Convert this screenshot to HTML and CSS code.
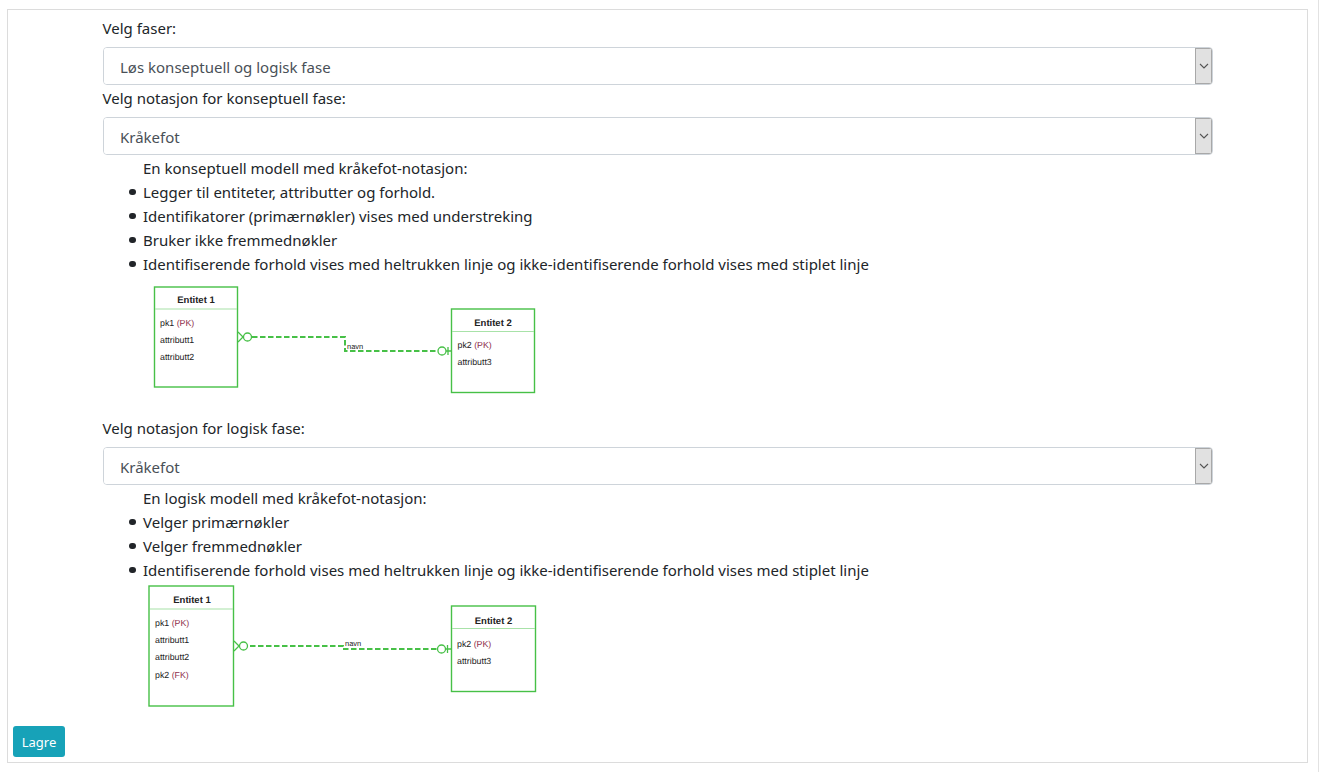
FILE: index.html
```html
<!DOCTYPE html>
<html lang="en">
<head>
    <meta charset="UTF-8">
    <title>Velg faser</title>
    <link rel="stylesheet" href="styles.css">
</head>
<body>
    <form class="panel">
        <div class="fields">
            <label class="field-label" for="faser">Velg faser:</label>
            <div class="select-box">
                <select id="faser"><option>Løs konseptuell og logisk fase</option></select>
                <span class="select-arrow"><svg width="10" height="6" viewBox="0 0 10 6"><path d="M1 1l4 4 4-4" fill="none" stroke="#555" stroke-width="1.1"/></svg></span>
            </div>

            <label class="field-label" for="konseptuell">Velg notasjon for konseptuell fase:</label>
            <div class="select-box">
                <select id="konseptuell"><option>Kråkefot</option></select>
                <span class="select-arrow"><svg width="10" height="6" viewBox="0 0 10 6"><path d="M1 1l4 4 4-4" fill="none" stroke="#555" stroke-width="1.1"/></svg></span>
            </div>
            <div class="notes">
                <p>En konseptuell modell med kråkefot-notasjon:</p>
                <ul>
                    <li>Legger til entiteter, attributter og forhold.</li>
                    <li>Identifikatorer (primærnøkler) vises med understreking</li>
                    <li>Bruker ikke fremmednøkler</li>
                    <li>Identifiserende forhold vises med heltrukken linje og ikke-identifiserende forhold vises med stiplet linje</li>
                </ul>
            </div>
            <svg class="diagram diagram-first" width="400" height="120" viewBox="143 280 400 120">
                <rect class="box" x="154.5" y="287" width="83" height="100"/>
                <line class="divider" x1="155" y1="309" x2="237" y2="309"/>
                <text class="title" x="196" y="303">Entitet 1</text>
                <text class="row" x="160" y="326">pk1 <tspan class="key">(PK)</tspan></text>
                <text class="row" x="160" y="343">attributt1</text>
                <text class="row" x="160" y="360">attributt2</text>
                <path class="edge" d="M238 332l5 5-5 5"/>
                <circle class="edge" cx="247.5" cy="337" r="4"/>
                <path class="edge dashed" d="M252 337H345V351H438"/>
                <circle class="edge" cx="442" cy="351" r="4"/>
                <path class="edge" d="M446 351h6M448 347v8"/>
                <text class="edge-label" x="347" y="349">navn</text>
                <rect class="box" x="451.5" y="309" width="83" height="83.5"/>
                <line class="divider" x1="452" y1="331.5" x2="534" y2="331.5"/>
                <text class="title" x="493" y="325.5">Entitet 2</text>
                <text class="row" x="457.5" y="348">pk2 <tspan class="key">(PK)</tspan></text>
                <text class="row" x="457.5" y="365">attributt3</text>
            </svg>

            <label class="field-label" for="logisk">Velg notasjon for logisk fase:</label>
            <div class="select-box">
                <select id="logisk"><option>Kråkefot</option></select>
                <span class="select-arrow"><svg width="10" height="6" viewBox="0 0 10 6"><path d="M1 1l4 4 4-4" fill="none" stroke="#555" stroke-width="1.1"/></svg></span>
            </div>
            <div class="notes">
                <p>En logisk modell med kråkefot-notasjon:</p>
                <ul>
                    <li>Velger primærnøkler</li>
                    <li>Velger fremmednøkler</li>
                    <li>Identifiserende forhold vises med heltrukken linje og ikke-identifiserende forhold vises med stiplet linje</li>
                </ul>
            </div>
            <svg class="diagram diagram-second" width="400" height="126" viewBox="143 582 400 126">
                <rect class="box" x="149" y="586" width="84.5" height="120"/>
                <line class="divider" x1="150" y1="609" x2="233" y2="609"/>
                <text class="title" x="192" y="602.5">Entitet 1</text>
                <text class="row" x="155" y="626">pk1 <tspan class="key">(PK)</tspan></text>
                <text class="row" x="155" y="643">attributt1</text>
                <text class="row" x="155" y="660">attributt2</text>
                <text class="row" x="155" y="678">pk2 <tspan class="key">(FK)</tspan></text>
                <path class="edge" d="M234 641l5 5-5 5"/>
                <circle class="edge" cx="243.5" cy="646" r="4"/>
                <path class="edge dashed" d="M250 646H343V649H438"/>
                <circle class="edge" cx="441.5" cy="649" r="4"/>
                <path class="edge" d="M445.5 649h6M447.5 645v8"/>
                <text class="edge-label" x="345" y="646">navn</text>
                <rect class="box" x="451.5" y="606" width="84" height="85.5"/>
                <line class="divider" x1="452" y1="628.5" x2="535" y2="628.5"/>
                <text class="title" x="493.5" y="623.5">Entitet 2</text>
                <text class="row" x="457" y="647">pk2 <tspan class="key">(PK)</tspan></text>
                <text class="row" x="457" y="664">attributt3</text>
            </svg>
        </div>
        <button class="btn-save" type="button">Lagre</button>
    </form>
</body>
</html>
```

FILE: styles.css
```css
html, body {
    height: 100%;
}

body {
    margin: 0;
    box-sizing: border-box;
    padding: 9px 10px 9px 7px;
    border-right: 1px solid #e2e2e2;
    background-color: #fff;
    color: #212529;
    font-family: "Noto Sans", "Open Sans", sans-serif;
    font-size: 15px;
    line-height: 24px;
    overflow: hidden;
}

.panel {
    box-sizing: border-box;
    height: 754px;
    border: 1px solid #dcdcdc;
    padding: 6px 5px 5px 5px;
    display: flex;
    flex-direction: column;
}

.fields {
    margin: 0 89px 0 90px;
    flex: 1;
}

.field-label {
    display: block;
    margin-bottom: 7px;
    margin-left: -0.5px;
}

.select-box {
    display: flex;
    height: 38px;
    box-sizing: border-box;
    margin-bottom: 1px;
    border: 1px solid #ced4da;
    border-radius: 4px;
    overflow: hidden;
}

.select-box select {
    flex: 1;
    appearance: none;
    border: none;
    background: #fff;
    padding: 1px 16px 0;
    color: #495057;
    font: inherit;
}

.select-arrow {
    width: 15px;
    display: flex;
    align-items: center;
    justify-content: center;
    background-color: #e1e1e1;
    border: 1px solid #a8a8a8;
}

.notes p {
    margin: 0;
    padding-left: 40px;
}

.notes ul {
    margin: 0;
    padding-left: 26px;
    list-style: none;
}

.notes li {
    display: flex;
    align-items: center;
}

.notes li::before {
    content: "";
    flex: none;
    width: 6.5px;
    height: 6.5px;
    margin-right: 7.5px;
    border-radius: 50%;
    background-color: #212529;
}

.diagram {
    display: block;
    margin: 4px 0 0 40px;
    text-rendering: geometricPrecision;
}

.diagram-first {
    margin-bottom: 16px;
}

.diagram-second {
    margin-top: 0;
}

.box {
    fill: #fff;
    stroke: #47c047;
    stroke-width: 1.4;
}

.divider {
    stroke: #a8e2a8;
    stroke-width: 1.2;
}

.title {
    font-family: "Liberation Sans", sans-serif;
    font-size: 9.5px;
    font-weight: bold;
    text-anchor: middle;
    fill: #222;
}

.row {
    font-family: "Liberation Sans", sans-serif;
    font-size: 8.8px;
    fill: #222;
}

.key {
    fill: #8e2f4d;
}

.edge {
    fill: none;
    stroke: #47c047;
    stroke-width: 1.3;
}

.dashed {
    stroke-width: 2;
    stroke-dasharray: 5.5 2.5;
}

.edge-label {
    font-family: "Liberation Sans", sans-serif;
    font-size: 7.5px;
    fill: #222;
}

.btn-save {
    align-self: flex-start;
    width: 52px;
    height: 31px;
    padding: 0;
    border: none;
    border-radius: 3px;
    background-color: #17a2b8;
    color: #fff;
    font-family: inherit;
    font-size: 13px;
}
```
